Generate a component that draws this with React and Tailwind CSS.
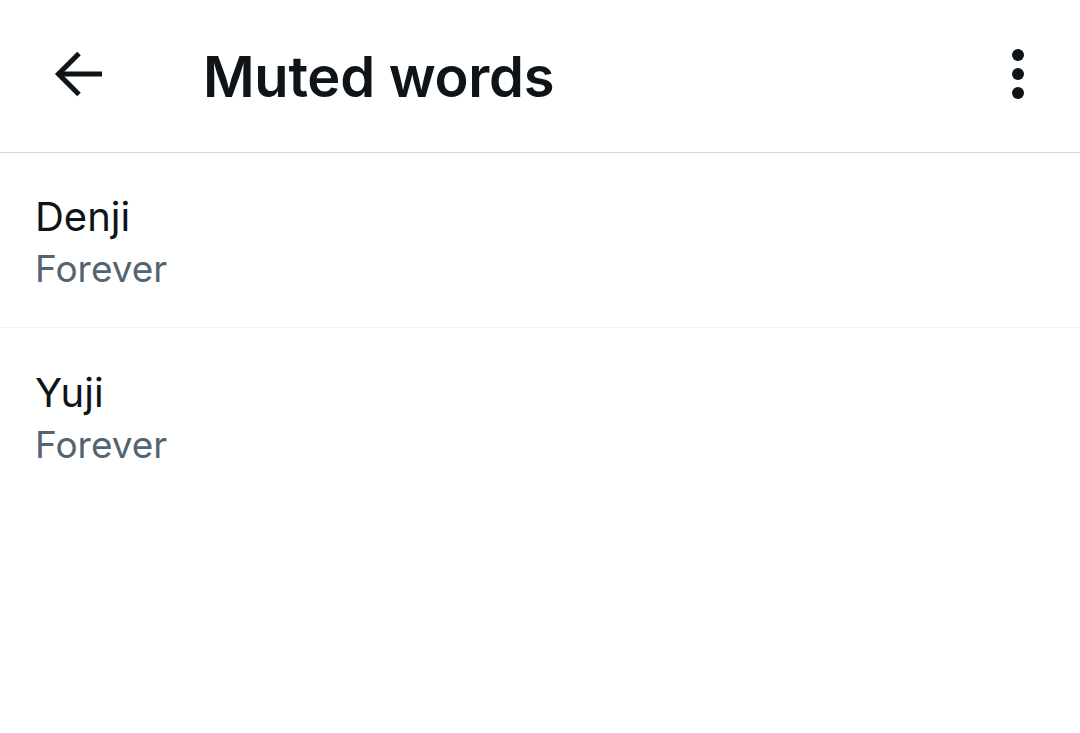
export default function App() {
  const items = ["Denji", "Yuji"];
  return (
    <div className="w-[1080px] h-[733px] bg-white overflow-hidden" style={{ fontFamily: "Inter, 'Noto Sans', sans-serif" }}>
      <header className="h-[153px] flex items-center border-b border-[#d4d9db]">
        <div className="w-[203px] flex items-center pl-[54px] pb-[5px]">
          <svg width="48" height="46" viewBox="0 0 48 46" fill="none" className="shrink-0">
            <polyline points="25,2.5 4.5,23 25,43.5" stroke="#0f1419" strokeWidth="5" fill="none" strokeLinejoin="miter" />
            <line x1="5" y1="23" x2="48" y2="23" stroke="#0f1419" strokeWidth="5" />
          </svg>
        </div>
        <h1 className="flex-1 text-[56px] font-semibold text-[#0f1419] leading-none tracking-[-0.005em] pt-[2px]">Muted words</h1>
        <div className="pr-[56px] pb-[5px] flex flex-col items-center gap-[7px]">
          <span className="w-3 h-3 rounded-full bg-[#0f1419]" />
          <span className="w-3 h-3 rounded-full bg-[#0f1419]" />
          <span className="w-3 h-3 rounded-full bg-[#0f1419]" />
        </div>
      </header>
      {items.map((w, i) => (
        <div key={w} className={"h-[175px] px-[35px] flex flex-col justify-center pt-[6px] " + (i === 0 ? "border-b border-[#eff3f4]" : "")}>
          <div className="text-[40px] leading-[52px] text-[#0f1419]">{w}</div>
          <div className="text-[37px] leading-[52px] text-[#536471]">Forever</div>
        </div>
      ))}
    </div>
  );
}
